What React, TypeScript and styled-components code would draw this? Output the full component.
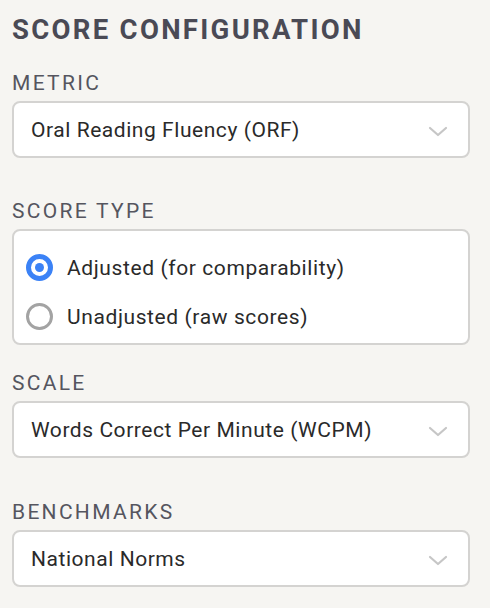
import React from "react";
import styled, { createGlobalStyle } from "styled-components";

const Global = createGlobalStyle`
  html, body { margin: 0; padding: 0; background: #f6f5f2; }
  body { font-family: Roboto, "Liberation Sans", sans-serif; }
  * { box-sizing: border-box; }
`;

const Panel = styled.div`
  width: 490px;
  height: 608px;
  padding: 13px 20px 0 12px;
  background: #f6f5f2;
  overflow: hidden;
`;

const Title = styled.h2`
  margin: 0 0 24px;
  font-size: 27.5px;
  line-height: 34px;
  font-weight: 700;
  letter-spacing: 2.3px;
  color: #4a4a55;
  white-space: nowrap;
`;

const Group = styled.div<{ $gap: number }>`
  margin-bottom: ${(p) => p.$gap}px;
`;

const Label = styled.div`
  font-size: 21px;
  line-height: 24px;
  letter-spacing: 2.3px;
  color: #55555f;
  margin-bottom: 6px;
`;

const SelectBox = styled.div`
  height: 57px;
  border: 2px solid #d4d3d1;
  border-radius: 8px;
  background: #fff;
  display: flex;
  align-items: center;
  justify-content: space-between;
  padding: 0 20px 0 17px;
  font-size: 21px;
  letter-spacing: 0.55px;
  color: #2a2a2a;
`;

const Chevron = styled.svg`
  width: 20px;
  height: 12px;
  margin-top: 4px;
`;

const RadioBox = styled.div`
  border: 2px solid #d4d3d1;
  border-radius: 8px;
  background: #fff;
  padding: 12px 12px 2px;
  display: flex;
  flex-direction: column;
`;

const RadioRow = styled.div`
  display: flex;
  align-items: center;
  gap: 14px;
  height: 49px;
  font-size: 21px;
  letter-spacing: 0.6px;
  color: #2a2a2a;
`;

const Ring = styled.span<{ $on: boolean }>`
  width: 27px;
  height: 27px;
  border-radius: 50%;
  border: ${(p) => (p.$on ? "5px solid #3b82f6" : "3.5px solid #a3a3a3")};
  display: flex;
  align-items: center;
  justify-content: center;
  flex: none;
  background: #fff;
  &::after {
    content: "";
    display: ${(p) => (p.$on ? "block" : "none")};
    width: 9px;
    height: 9px;
    border-radius: 50%;
    background: #3b82f6;
  }
`;

const Select = ({ value }: { value: string }) => (
  <SelectBox>
    <span>{value}</span>
    <Chevron viewBox="0 0 20 12">
      <path d="M2 2 L10 9 L18 2" fill="none" stroke="#c6c6c6" strokeWidth="2.2" strokeLinecap="round" strokeLinejoin="round" />
    </Chevron>
  </SelectBox>
);

export default function App() {
  return (
    <>
      <Global />
      <Panel>
        <Title>SCORE CONFIGURATION</Title>
        <Group $gap={41}>
          <Label>METRIC</Label>
          <Select value="Oral Reading Fluency (ORF)" />
        </Group>
        <Group $gap={26}>
          <Label>SCORE TYPE</Label>
          <RadioBox>
            <RadioRow>
              <Ring $on={true} />
              Adjusted (for comparability)
            </RadioRow>
            <RadioRow>
              <Ring $on={false} />
              Unadjusted (raw scores)
            </RadioRow>
          </RadioBox>
        </Group>
        <Group $gap={42}>
          <Label>SCALE</Label>
          <Select value="Words Correct Per Minute (WCPM)" />
        </Group>
        <Group $gap={0}>
          <Label>BENCHMARKS</Label>
          <Select value="National Norms" />
        </Group>
      </Panel>
    </>
  );
}
